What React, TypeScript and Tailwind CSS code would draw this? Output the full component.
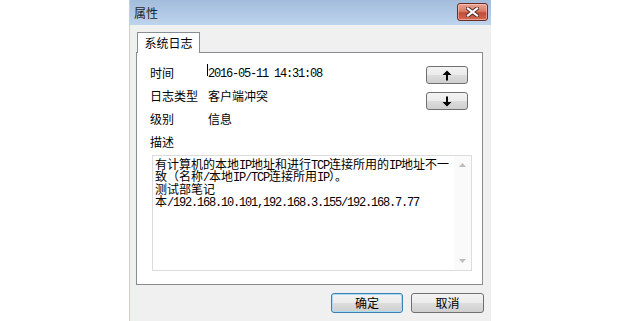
import React from "react";

const cjk = "font-['Noto_Sans_CJK_SC',sans-serif]";
const btnBg =
  "bg-[linear-gradient(#f3f3f3_0%,#ebebeb_50%,#dddddd_50%,#cfcfcf_100%)]";

// ASCII runs use a half-width monospace so they line up like SimSun
function Mixed({ text }: { text: string }) {
  const parts = text.split(/([\x20-\x7e]+)/).filter(Boolean);
  return (
    <>
      {parts.map((p, i) =>
        /^[\x20-\x7e]+$/.test(p) ? (
          <span key={i} className="font-['Liberation_Mono',monospace] tracking-[-1.2px]">
            {p}
          </span>
        ) : (
          <span key={i}>{p}</span>
        )
      )}
    </>
  );
}

function ArrowButton({ dir }: { dir: "up" | "down" }) {
  return (
    <button
      type="button"
      className={`flex h-[18px] w-[42px] items-center justify-center rounded-[3px] border border-[#707070] ${btnBg}`}
    >
      <svg width="10" height="11" viewBox="0 0 10 11" className={dir === "down" ? "rotate-180" : ""}>
        <path d="M5 0.5L9.5 5H6V10.5H4V5H0.5Z" fill="#000" />
      </svg>
    </button>
  );
}

const lines = [
  "有计算机的本地IP地址和进行TCP连接所用的IP地址不一",
  "致（名称/本地IP/TCP连接所用IP）。",
  "测试部笔记",
  "本/192.168.10.101,192.168.3.155/192.168.7.77",
];

export default function App() {
  return (
    <div className={`h-[321px] w-[620px] overflow-hidden bg-white text-[12px] text-black ${cjk}`}>
      <div className="ml-[129px] flex h-[321px] w-[362px] flex-col border-l border-[#b9d1ea] bg-[#f0f0f0]">
        {/* title bar */}
        <div className="flex h-[25px] items-center justify-between bg-[linear-gradient(#a2bcdb,#bdd4ed)] pl-[4px] pr-[3px]">
          <span className="leading-none text-[#1e1e1e]">属性</span>
          <button
            type="button"
            className="mb-[1px] flex h-[18px] w-[31px] items-center justify-center rounded-[3px] border border-[#6e2a26] bg-[linear-gradient(#e9a593_0%,#d87c68_45%,#c44a38_55%,#d16a52_100%)] shadow-[inset_0_0_0_1px_rgba(255,220,210,0.5)]"
          >
            <svg width="13" height="10" viewBox="0 0 13 10">
              <path d="M2 1.5L11 8.5M11 1.5L2 8.5" stroke="#4a2a26" strokeWidth="4" strokeLinecap="square" />
              <path d="M2 1.5L11 8.5M11 1.5L2 8.5" stroke="#fff" strokeWidth="2.2" strokeLinecap="square" />
            </svg>
          </button>
        </div>

        {/* body */}
        <div className="flex flex-col pl-[6px] pt-[7px]">
          <div className="relative z-10 -mb-px ml-[1px] flex h-[21px] w-[63px] items-center justify-center border border-b-0 border-[#898c95] bg-white">
            系统日志
          </div>
          <div className="flex h-[233px] w-[347px] flex-col border border-[#898c95] bg-white">
            <div className="flex pr-[14px] pt-[8px]">
              <div className="flex flex-1 flex-col pl-[13px]">
                <div className="flex h-[23px] items-center">
                  <span className="w-[58px]">时间</span>
                  <span className="relative">
                    <span className="absolute left-[-1px] top-[1px] h-[12px] w-px bg-black" />
                    <Mixed text="2016-05-11 14:31:08" />
                  </span>
                </div>
                <div className="flex h-[23px] items-center">
                  <span className="w-[58px]">日志类型</span>
                  <span>客户端冲突</span>
                </div>
                <div className="flex h-[23px] items-center">
                  <span className="w-[58px]">级别</span>
                  <span>信息</span>
                </div>
                <div className="flex h-[23px] items-center">
                  <span>描述</span>
                </div>
              </div>
              <div className="flex flex-col gap-[8px] pt-[5px]">
                <ArrowButton dir="up" />
                <ArrowButton dir="down" />
              </div>
            </div>
            <div className="ml-[15px] mt-[2px] flex h-[116px] w-[320px] border border-[#dcdcdc] bg-white">
              <div className="flex-1 whitespace-pre pl-[2px] pt-[2px]">
                {lines.map((l, i) => (
                  <div key={i} className="h-[12.3px] leading-[12px]">
                    <Mixed text={l} />
                  </div>
                ))}
              </div>
              <div className="flex w-[17px] flex-col items-center justify-between bg-[#fafafa] py-[7px]">
                <svg width="7" height="4" viewBox="0 0 7 4">
                  <path d="M0 4L3.5 0L7 4Z" fill="#bcbcbc" />
                </svg>
                <svg width="7" height="4" viewBox="0 0 7 4">
                  <path d="M0 0L3.5 4L7 0Z" fill="#bcbcbc" />
                </svg>
              </div>
            </div>
          </div>

          {/* footer buttons */}
          <div className="mt-[8px] flex w-[348px] justify-end gap-[8px]">
            <button
              type="button"
              className={`h-[20px] w-[72px] rounded-[3px] border border-[#3c7fb1] shadow-[inset_0_0_0_1px_#a8dcf6] ${btnBg}`}
            >
              确定
            </button>
            <button
              type="button"
              className={`h-[20px] w-[73px] rounded-[3px] border border-[#707070] ${btnBg}`}
            >
              取消
            </button>
          </div>
        </div>
      </div>
    </div>
  );
}
